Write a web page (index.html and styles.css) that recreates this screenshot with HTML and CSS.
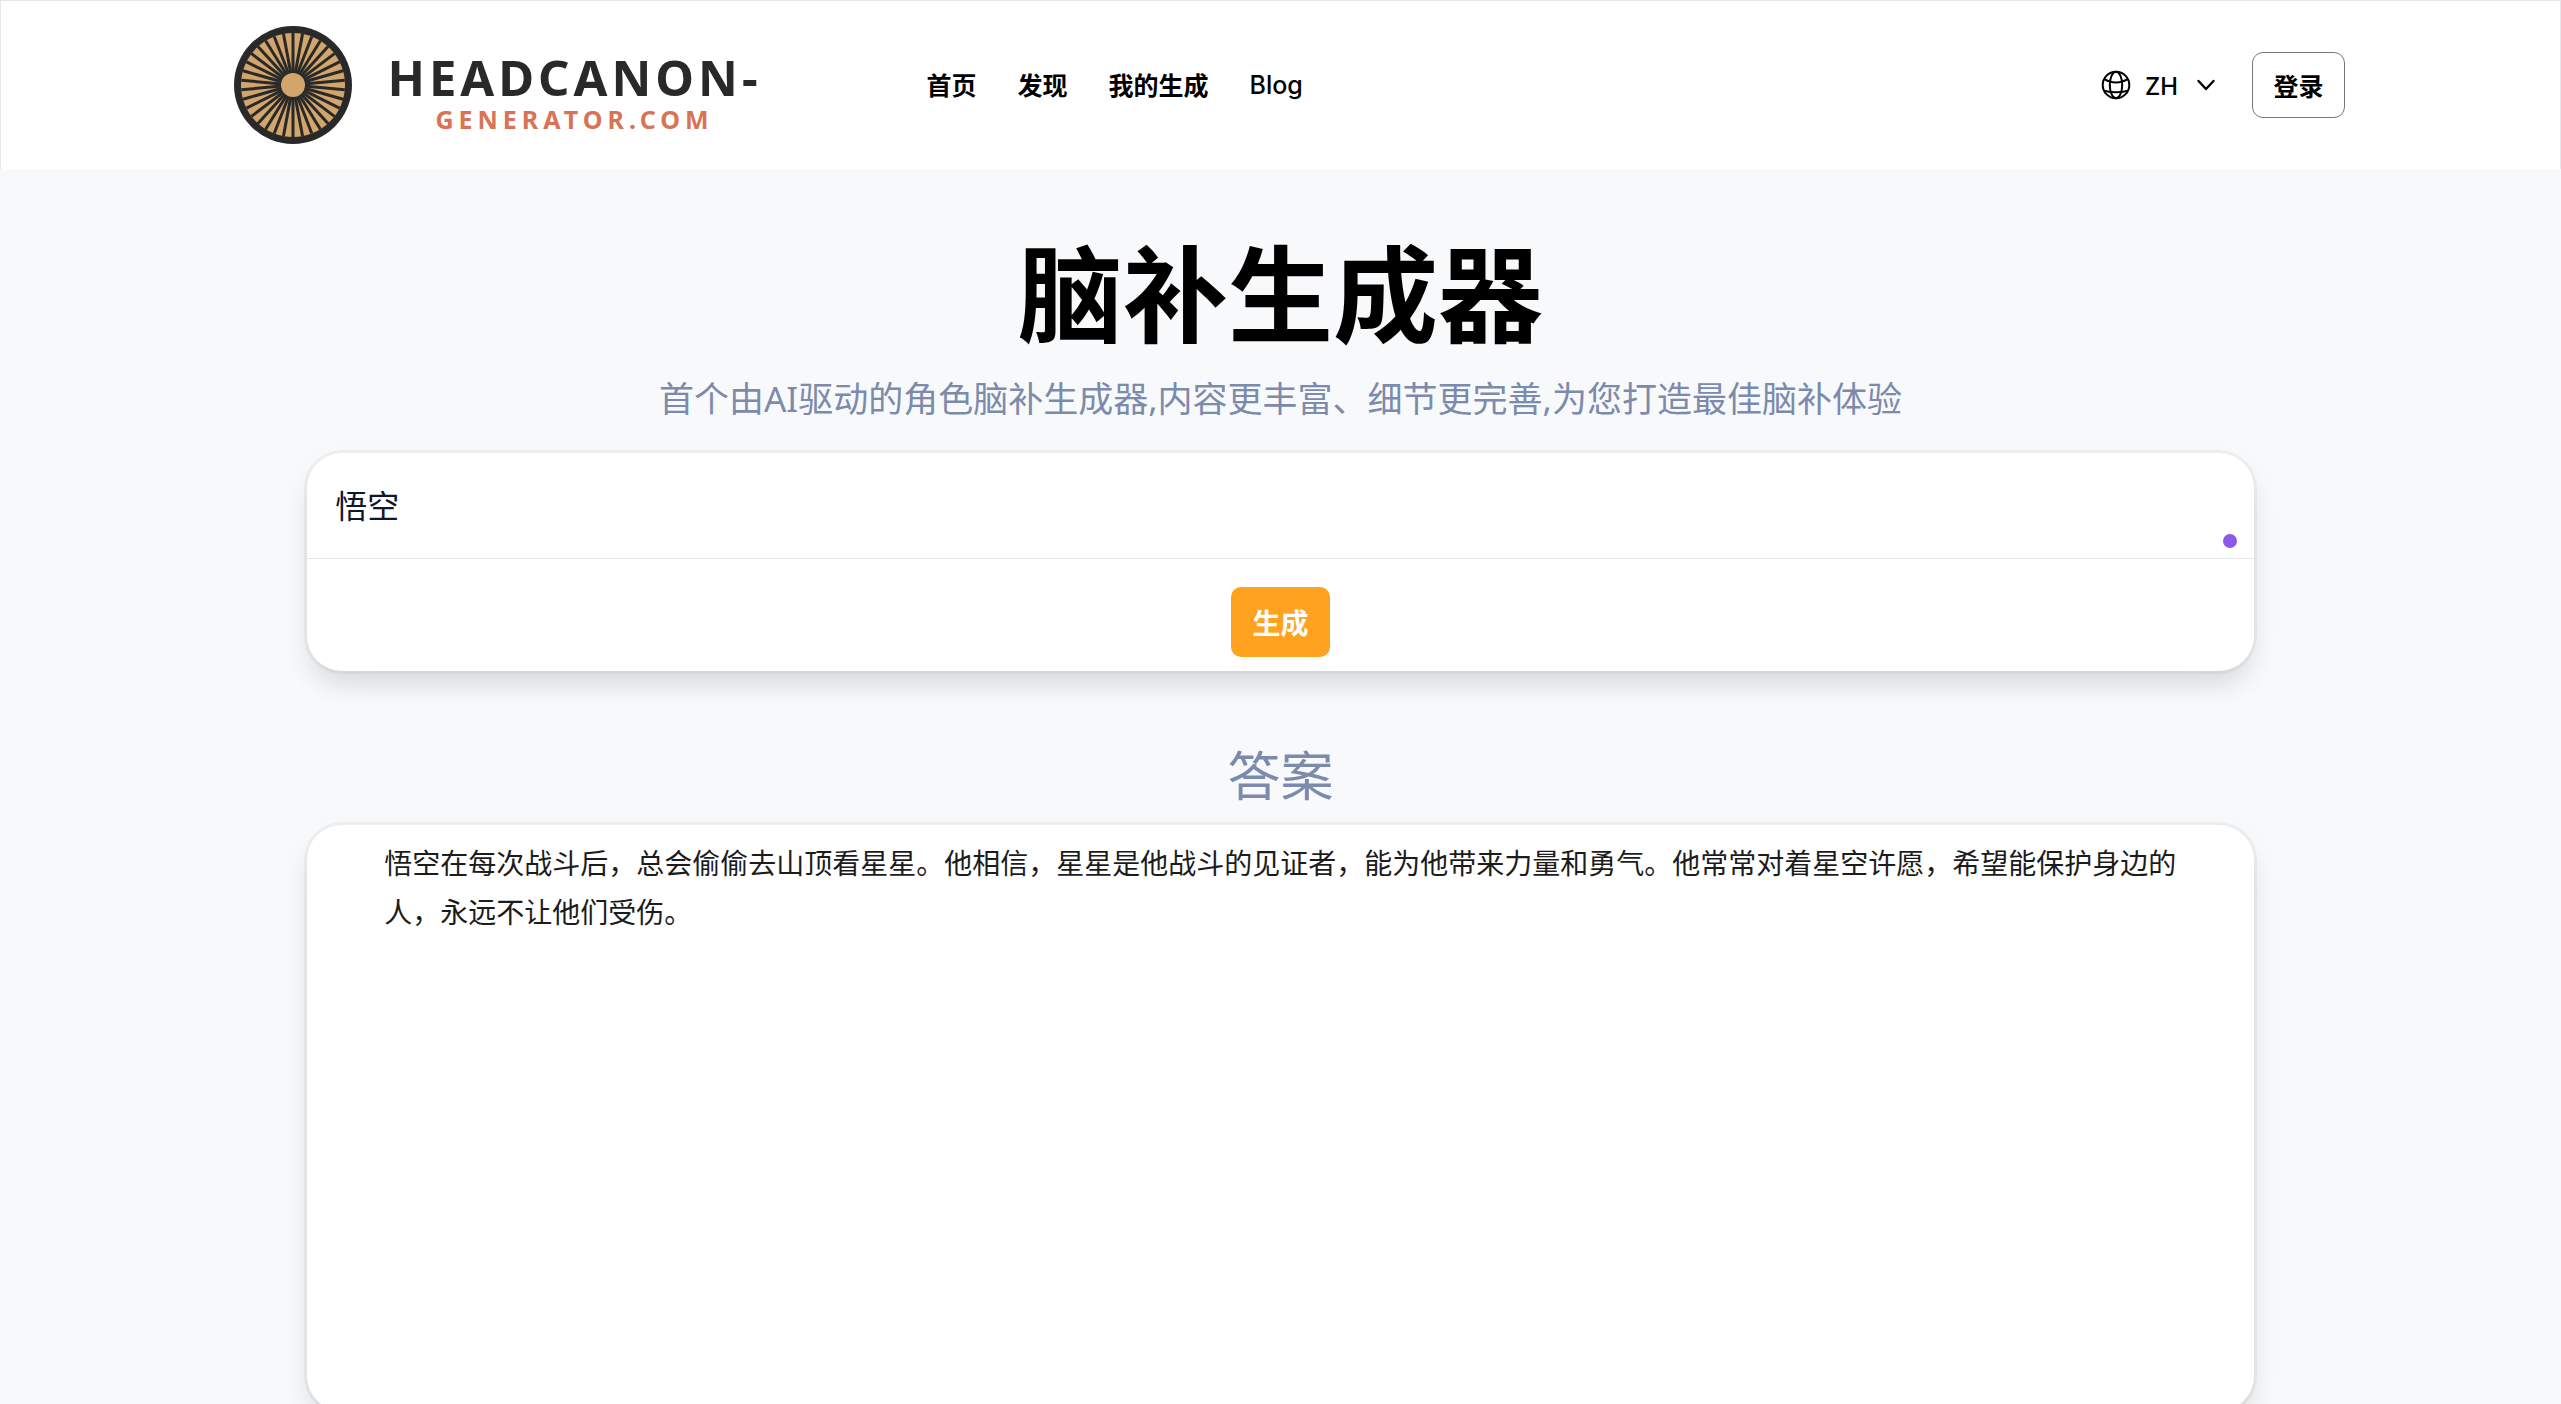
FILE: index.html
```html
<!DOCTYPE html>
<html lang="zh">
<head>
  <meta charset="UTF-8" />
  <meta name="viewport" content="width=device-width, initial-scale=1" />
  <title>脑补生成器</title>
  <link rel="stylesheet" href="styles.css">
</head>
<body>
  <header class="site-header">
    <div class="header-inner">
      <a class="logo" href="#">
        <svg class="logo-mark" viewBox="0 0 120 120" aria-hidden="true">
          <defs><path id="spoke" d="M60 8V112" stroke="#292929" stroke-width="3" /></defs>
          <circle cx="60" cy="60" r="59" fill="#292929" />
          <circle cx="60" cy="60" r="52" fill="#d2a56c" />
          <use href="#spoke" />
          <use href="#spoke" transform="rotate(10.59 60 60)" />
          <use href="#spoke" transform="rotate(21.18 60 60)" />
          <use href="#spoke" transform="rotate(31.76 60 60)" />
          <use href="#spoke" transform="rotate(42.35 60 60)" />
          <use href="#spoke" transform="rotate(52.94 60 60)" />
          <use href="#spoke" transform="rotate(63.53 60 60)" />
          <use href="#spoke" transform="rotate(74.12 60 60)" />
          <use href="#spoke" transform="rotate(84.71 60 60)" />
          <use href="#spoke" transform="rotate(95.29 60 60)" />
          <use href="#spoke" transform="rotate(105.88 60 60)" />
          <use href="#spoke" transform="rotate(116.47 60 60)" />
          <use href="#spoke" transform="rotate(127.06 60 60)" />
          <use href="#spoke" transform="rotate(137.65 60 60)" />
          <use href="#spoke" transform="rotate(148.24 60 60)" />
          <use href="#spoke" transform="rotate(158.82 60 60)" />
          <use href="#spoke" transform="rotate(169.41 60 60)" />
          <circle cx="60" cy="60" r="12" fill="#d2a56c" />
        </svg>
        <span class="logo-text">
          <span class="logo-name">HEADCANON-</span>
          <span class="logo-domain">GENERATOR.COM</span>
        </span>
      </a>

      <nav class="main-nav">
        <a href="#">首页</a>
        <a href="#">发现</a>
        <a href="#">我的生成</a>
        <a class="latin" href="#">Blog</a>
      </nav>

      <div class="header-actions">
        <button class="lang-button" type="button">
          <svg class="globe" viewBox="0 0 30 30" fill="none" stroke="currentColor" stroke-width="2" aria-hidden="true">
            <circle cx="15" cy="15" r="13.3" />
            <ellipse cx="15" cy="15" rx="6.2" ry="13.3" />
            <path d="M3.3 9.2C10 13.6 20 13.6 26.7 9.2M3.3 20.8C10 22.6 20 22.6 26.7 20.8" />
          </svg>
          ZH
          <svg class="chevron" viewBox="0 0 18 12" fill="none" stroke="currentColor" stroke-width="2.4" stroke-linecap="round" stroke-linejoin="round" aria-hidden="true">
            <path d="M1.5 2L9 10L16.5 2" />
          </svg>
        </button>
        <button class="login-button" type="button">登录</button>
      </div>
    </div>
  </header>

  <main>
    <h1>脑补生成器</h1>
    <p class="subtitle">首个由AI驱动的角色脑补生成器,内容更丰富、细节更完善,为您打造最佳脑补体验</p>

    <form class="card prompt-card">
      <div class="prompt-field">
        <textarea rows="1" aria-label="角色">悟空</textarea>
        <span class="status-dot"></span>
      </div>
      <div class="prompt-actions">
        <button class="generate-button" type="button">生成</button>
      </div>
    </form>

    <h2>答案</h2>
    <section class="card answer-card">
      <p>悟空在每次战斗后，总会偷偷去山顶看星星。他相信，星星是他战斗的见证者，能为他带来力量和勇气。他常常对着星空许愿，希望能保护身边的人，永远不让他们受伤。</p>
    </section>
  </main>
</body>
</html>
```
FILE: styles.css
```css
* {
  box-sizing: border-box;
}

body {
  margin: 0;
  height: 100vh;
  overflow: hidden;
  background: #f8f9fb;
  color: #000;
  font-family: 'Noto Sans', 'Noto Sans CJK SC', sans-serif;
}

h1, h2, p {
  margin: 0;
}

a {
  color: inherit;
  text-decoration: none;
}

button, textarea {
  font-family: inherit;
  color: inherit;
}

.site-header {
  background: #fff;
  border: 1px solid #e5e7eb;
  border-bottom: 0;
}

.header-inner {
  display: flex;
  align-items: center;
  max-width: 2128px;
  height: 168px;
  margin: 0 auto;
}

.logo {
  display: flex;
  align-items: center;
  gap: 36px;
  margin-left: 16px;
}

.logo-mark {
  width: 120px;
  height: 120px;
}

.logo-text {
  display: flex;
  flex-direction: column;
  align-items: center;
  width: 372px;
  padding-top: 20px;
  font-weight: 700;
}

.logo-name {
  font-size: 49px;
  line-height: 48px;
  letter-spacing: 4px;
  color: #292929;
}

.logo-domain {
  font-size: 25px;
  line-height: 36px;
  letter-spacing: 5px;
  color: #d97355;
}

.main-nav {
  display: flex;
  align-items: center;
  gap: 41px;
  margin-left: 166px;
  font-size: 25px;
  line-height: 36px;
  font-weight: 700;
}

.main-nav .latin {
  font-family: Inter, sans-serif;
  font-weight: 500;
}

.header-actions {
  display: flex;
  align-items: center;
  gap: 36px;
  margin-left: auto;
}

.lang-button {
  display: flex;
  align-items: center;
  gap: 14px;
  padding: 0;
  border: 0;
  background: none;
  font-size: 25px;
  font-weight: 500;
}

.globe {
  width: 30px;
  height: 30px;
}

.chevron {
  width: 20px;
  height: 12px;
  margin-left: 4px;
}

.login-button {
  height: 66px;
  padding: 0 20px;
  border: 1px solid #777;
  border-radius: 11px;
  background: #fff;
  font-size: 25px;
  font-weight: 700;
}

main {
  width: 76%;
  margin: 0 auto;
  padding-top: 72px;
}

h1 {
  font-size: 105px;
  line-height: 105px;
  font-weight: 700;
  text-align: center;
}

.subtitle {
  margin-top: 28px;
  font-size: 35px;
  line-height: 49px;
  color: #7c8aac;
  text-align: center;
}

.card {
  background: #fff;
  border-radius: 35px;
  box-shadow: 0 0 0 3px rgba(0, 0, 0, 0.04), 0 18px 26px -5px rgba(0, 0, 0, 0.1), 0 10px 36px rgba(0, 0, 0, 0.04);
}

.prompt-card {
  margin-top: 30px;
}

.prompt-field {
  position: relative;
  border-bottom: 1px solid #e5e7eb;
}

.prompt-field textarea {
  display: block;
  width: 100%;
  height: 105px;
  padding: 28px;
  border: 0;
  outline: 0;
  background: none;
  resize: none;
  overflow: hidden;
  font-size: 32px;
  line-height: 49px;
  color: #0f172a;
}

.status-dot {
  position: absolute;
  right: 17px;
  bottom: 10px;
  width: 14px;
  height: 14px;
  border-radius: 50%;
  background: #8b5ae8;
}

.prompt-actions {
  display: flex;
  justify-content: center;
  padding: 28px 28px 14px;
}

.generate-button {
  height: 70px;
  padding: 0 21px;
  border: 0;
  border-radius: 10px;
  background: #ffa21f;
  color: #fff;
  font-size: 28px;
  font-weight: 700;
}

h2 {
  margin-top: 73px;
  font-size: 53px;
  line-height: 63px;
  font-weight: 400;
  color: #7c8aac;
  text-align: center;
}

.answer-card {
  min-height: 586px;
  margin-top: 18px;
  padding: 14px 77px;
}

.answer-card p {
  font-size: 28px;
  line-height: 49px;
  color: #1c1c1c;
}
```
